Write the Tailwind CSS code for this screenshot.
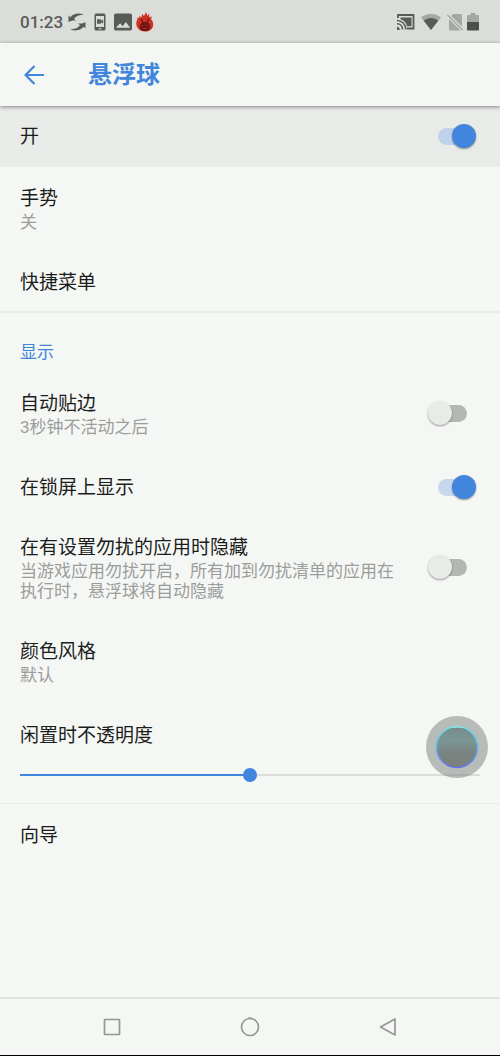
<!DOCTYPE html>
<html lang="zh-CN">
<head>
<meta charset="utf-8">
<meta name="viewport" content="width=device-width, initial-scale=1">
<title>悬浮球</title>
<script src="https://cdn.jsdelivr.net/npm/@tailwindcss/browser@4"></script>
</head>
<body class="relative flex min-h-screen flex-col bg-[#f5f7f5] font-[Roboto,'Noto_Sans_CJK_SC',sans-serif] text-[19px] leading-[26px] text-[#1b1d1b]">

<!-- Status bar -->
<div class="flex h-[43px] shrink-0 items-center justify-between bg-[#dbdddb] px-5 text-[#595b59]">
  <div class="flex items-center">
    <span class="w-12 text-[17px] font-medium">01:23</span>
    <svg class="h-[18px] w-[18px]" viewBox="0 0 18 18" fill="currentColor" aria-hidden="true"><path d="M0.500 9V2.500l1.800 1.700C5.500.5 10.500-.4 16 1.800 11.500 1.700 8 3 6 6l2 1.500C5 7.200 2.500 7.600.5 9Z"/><path d="M17.500 9v6.500l-1.800-1.700C12.500 17.500 7.500 18.400 2 16.200c4.500.1 8-1.200 10-4.200l-2-1.500c3 .3 5.500-.1 7.500-1.500Z"/></svg>
    <svg class="ml-2 h-[18px] w-3" viewBox="0 0 12 18" fill="currentColor" aria-hidden="true"><path fill-rule="evenodd" d="M2 .5h8A1.500 1.500 0 0 1 11.500 2v14a1.500 1.500 0 0 1-1.500 1.500H2A1.500 1.500 0 0 1 .5 16V2A1.500 1.500 0 0 1 2 .5ZM2 3v11h8V3Zm2.500 12.200v1h3v-1Z"/><path d="M3 6.200h4v1.600l2.200-1.400v4.200L7 9.200v1.600H3Z"/></svg>
    <svg class="ml-2 h-[18px] w-[18px]" viewBox="0 0 19 18" fill="currentColor" aria-hidden="true"><path fill-rule="evenodd" d="M2 0h15a2 2 0 0 1 2 2v14a2 2 0 0 1-2 2H2a2 2 0 0 1-2-2V2a2 2 0 0 1 2-2Zm0 15h15l-4.500-6-3.400 4.500L6.500 10.300Z"/></svg>
    <svg class="ml-1 h-5 w-[18px]" viewBox="0 0 18 22" preserveAspectRatio="none" aria-hidden="true"><path fill="#cf3024" d="M3.500 7 3 4l2.500 2L6 2l2 2.500L10 0l1.300 4L13 2l.5 4L16 5l-1 3c4 4 3 13-6 13.500C0 21-1 12 1.500 8L1 6Z"/><path fill="#6e1814" d="M5.500 6.500 7.500 11h3l2-4.500.8 1.200-1.600 4c4 1.500 3.300 9.300-2.700 9.300s-6.700-7.800-2.700-9.300l-1.600-4Z"/><path fill="#cf3024" d="m5.800 14 2.200 1-2 .8Zm6.400 0-2.200 1 2 .8ZM7.500 17.500h3v1h-3Z"/></svg>
  </div>
  <div class="flex items-center">
    <svg class="h-[16px] w-[18px]" viewBox="0 0 18 16" fill="none" stroke="currentColor" aria-hidden="true"><path stroke-width="1.800" d="M1 4V1h15.500v13.500H10"/><path fill="currentColor" stroke="none" d="M3.500 3.500h11v8.700H10C9.300 8.500 7 6 3.500 5.200Z"/><path stroke-width="1.600" d="M0 6.500c5 0 8.800 3.700 8.800 9M0 9.800c3.200 0 5.500 2.400 5.500 5.700"/><path fill="currentColor" stroke="none" d="M0 12.800A3 3 0 0 1 2.700 16H0Z"/></svg>
    <svg class="ml-[6px] h-4 w-5" viewBox="0 0 20 16" aria-hidden="true"><path fill="#a5a7a5" d="M0 3.500C6-1.200 14-1.200 20 3.500L10 16Z"/><path fill="#595b59" d="M2.800 6.800c4.500-3.600 9.900-3.600 14.400 0L10 16Z"/></svg>
    <svg class="ml-[6px] h-[18px] w-4" viewBox="0 0 16 18" aria-hidden="true"><path fill="#a5a7a5" d="M6 1h7.500A1.500 1.500 0 0 1 15 2.500v11L4 3ZM2 6l11.500 11.500h-10A1.500 1.500 0 0 1 2 16Z"/><path stroke="#a5a7a5" stroke-width="1.500" d="m.5 2 15 15"/></svg>
    <svg class="mr-[1px] ml-1 h-[18px] w-3" viewBox="0 0 12 18" aria-hidden="true"><path fill="#a5a7a5" d="M3.500 0h5v2H11a1 1 0 0 1 1 1v6H0V3a1 1 0 0 1 1-1h2.500Z"/><path fill="#4d4f4d" d="M0 9h12v7.500a1 1 0 0 1-1 1H1a1 1 0 0 1-1-1Z"/></svg>
  </div>
</div>

<header class="relative flex h-[63px] shrink-0 items-center bg-[#f5f7f5] pl-6 text-[#4285dc] shadow-[0_1px_4px_rgba(0,0,0,0.45)]">
  <button type="button" aria-label="返回" class="flex w-16 items-center"><svg class="h-5 w-5" viewBox="0 0 20 20" fill="none" stroke="currentColor" stroke-width="2.200" aria-hidden="true"><path d="M20 10H2M10.500 1 1.500 10l9 9"/></svg></button>
  <h1 class="text-[24px] leading-8 font-bold">悬浮球</h1>
</header>

<main class="flex flex-1 flex-col">
  <label class="flex items-center justify-between bg-[#e9ebe9] pt-4 pr-6 pb-[17px] pl-5">
    <span class="pt-[2px]">开</span>
    <input type="checkbox" role="switch" checked class="relative h-6 w-12 shrink-0 appearance-none before:absolute before:top-1 before:left-[10px] before:h-[17px] before:w-[29px] before:rounded-full before:bg-[#b4b7b4] after:absolute after:top-0 after:left-0 after:h-6 after:w-6 after:rounded-full after:bg-[#e9ebe9] after:shadow-[0_1px_2px_rgba(0,0,0,0.4)] checked:before:bg-[#bed3eb] checked:after:left-6 checked:after:bg-[#4285dc]">
  </label>
  <button type="button" class="flex flex-col px-5 py-[19px] text-left">
    <span>手势</span>
    <span class="text-[17px] leading-5 text-[#9b9d9b]">关</span>
  </button>
  <button type="button" class="px-5 pt-[19px] pb-[15px] text-left">快捷菜单</button>

  <section class="flex flex-col border-t-2 border-[#e9ebe9]">
    <h2 class="px-5 pt-[29px] pb-[10px] text-[17px] leading-5 text-[#4285dc]">显示</h2>
    <label class="flex items-center justify-between gap-6 pt-4 pr-6 pb-[19px] pl-5">
      <span class="flex flex-col pt-[3px]"><span>自动贴边</span><span class="text-[17px] leading-5 text-[#9b9d9b]">3秒钟不活动之后</span></span>
      <input type="checkbox" role="switch" class="relative h-6 w-12 shrink-0 appearance-none before:absolute before:top-1 before:left-[10px] before:h-[17px] before:w-[29px] before:rounded-full before:bg-[#b4b7b4] after:absolute after:top-0 after:left-0 after:h-6 after:w-6 after:rounded-full after:bg-[#e9ebe9] after:shadow-[0_1px_2px_rgba(0,0,0,0.4)] checked:before:bg-[#c5d8ee] checked:after:left-6 checked:after:bg-[#4285dc]">
    </label>
    <label class="flex items-center justify-between gap-6 pt-4 pr-6 pb-[15px] pl-5">
      <span class="pt-[3px]">在锁屏上显示</span>
      <input type="checkbox" role="switch" checked class="relative h-6 w-12 shrink-0 appearance-none before:absolute before:top-1 before:left-[10px] before:h-[17px] before:w-[29px] before:rounded-full before:bg-[#b4b7b4] after:absolute after:top-0 after:left-0 after:h-6 after:w-6 after:rounded-full after:bg-[#e9ebe9] after:shadow-[0_1px_2px_rgba(0,0,0,0.4)] checked:before:bg-[#c5d8ee] checked:after:left-6 checked:after:bg-[#4285dc]">
    </label>
    <label class="flex items-center justify-between gap-6 pt-4 pr-6 pb-[19px] pl-5">
      <span class="flex flex-col pt-[3px]"><span>在有设置勿扰的应用时隐藏</span><span class="text-[17px] leading-5 text-[#9b9d9b]">当游戏应用勿扰开启，所有加到勿扰清单的应用在执行时，悬浮球将自动隐藏</span></span>
      <input type="checkbox" role="switch" class="relative h-6 w-12 shrink-0 appearance-none before:absolute before:top-1 before:left-[10px] before:h-[17px] before:w-[29px] before:rounded-full before:bg-[#b4b7b4] after:absolute after:top-0 after:left-0 after:h-6 after:w-6 after:rounded-full after:bg-[#e9ebe9] after:shadow-[0_1px_2px_rgba(0,0,0,0.4)] checked:before:bg-[#c5d8ee] checked:after:left-6 checked:after:bg-[#4285dc]">
    </label>
    <button type="button" class="flex flex-col px-5 py-[19px] text-left">
      <span>颜色风格</span>
      <span class="text-[17px] leading-5 text-[#9b9d9b]">默认</span>
    </button>
    <div class="flex flex-col px-5 pt-[19px] pb-[17px]">
      <label for="opacity">闲置时不透明度</label>
      <input id="opacity" type="range" min="0" max="100" value="50" class="mt-[15px] h-[22px] w-full appearance-none bg-[linear-gradient(to_right,#4285dc_50%,#dbdddb_50%)] bg-[length:100%_2px] bg-center bg-no-repeat [&::-webkit-slider-thumb]:h-[14px] [&::-webkit-slider-thumb]:w-[14px] [&::-webkit-slider-thumb]:appearance-none [&::-webkit-slider-thumb]:rounded-full [&::-webkit-slider-thumb]:bg-[#4285dc]">
    </div>
  </section>

  <button type="button" class="border-t border-[#e9ebe9] px-5 pt-[19px] pb-[15px] text-left">向导</button>
</main>

<!-- Floating ball -->
<button type="button" aria-label="悬浮球" class="absolute top-[716px] right-3 flex h-[62px] w-[62px] items-center justify-center rounded-full bg-[#7c827c]/50">
  <svg class="h-11 w-11" viewBox="0 0 44 44" aria-hidden="true">
    <defs>
      <linearGradient id="ring" x2="0" y2="1"><stop stop-color="#68e0ea"/><stop offset=".5" stop-color="#62b4f0"/><stop offset="1" stop-color="#6370f0"/></linearGradient>
      <linearGradient id="face" x2="0" y2="1"><stop stop-color="#788c8b"/><stop offset=".35" stop-color="#7b9694"/><stop offset=".65" stop-color="#798380"/><stop offset="1" stop-color="#7b817d"/></linearGradient>
    </defs>
    <circle cx="22" cy="22" r="20.500" fill="url(#face)" stroke="url(#ring)" stroke-width="1.600"/>
    <path d="M14 3.200Q22-.5 30 3.200 22 2 14 3.200Z" fill="#9ce8e4"/>
  </svg>
</button>

<nav class="flex h-[59px] shrink-0 items-center justify-around border-t-2 border-b border-t-[#e1e3e1] border-b-black px-[43px] text-[#969896]">
  <button type="button" aria-label="最近任务"><svg class="h-5 w-5" viewBox="0 0 20 20" fill="none" stroke="currentColor" stroke-width="1.700" aria-hidden="true"><rect x="2.500" y="2.500" width="15" height="15" rx=".5"/></svg></button>
  <button type="button" aria-label="主屏幕"><svg class="h-5 w-5" viewBox="0 0 20 20" fill="none" stroke="currentColor" stroke-width="1.700" aria-hidden="true"><circle cx="10" cy="10" r="8.500"/><path d="M8 .5h4" opacity=".5"/></svg></button>
  <button type="button" aria-label="返回"><svg class="h-5 w-5" viewBox="0 0 20 20" fill="none" stroke="currentColor" stroke-width="1.700" stroke-linejoin="round" aria-hidden="true"><path d="M17 2v16L2.500 10Z"/></svg></button>
</nav>
</body>
</html>
